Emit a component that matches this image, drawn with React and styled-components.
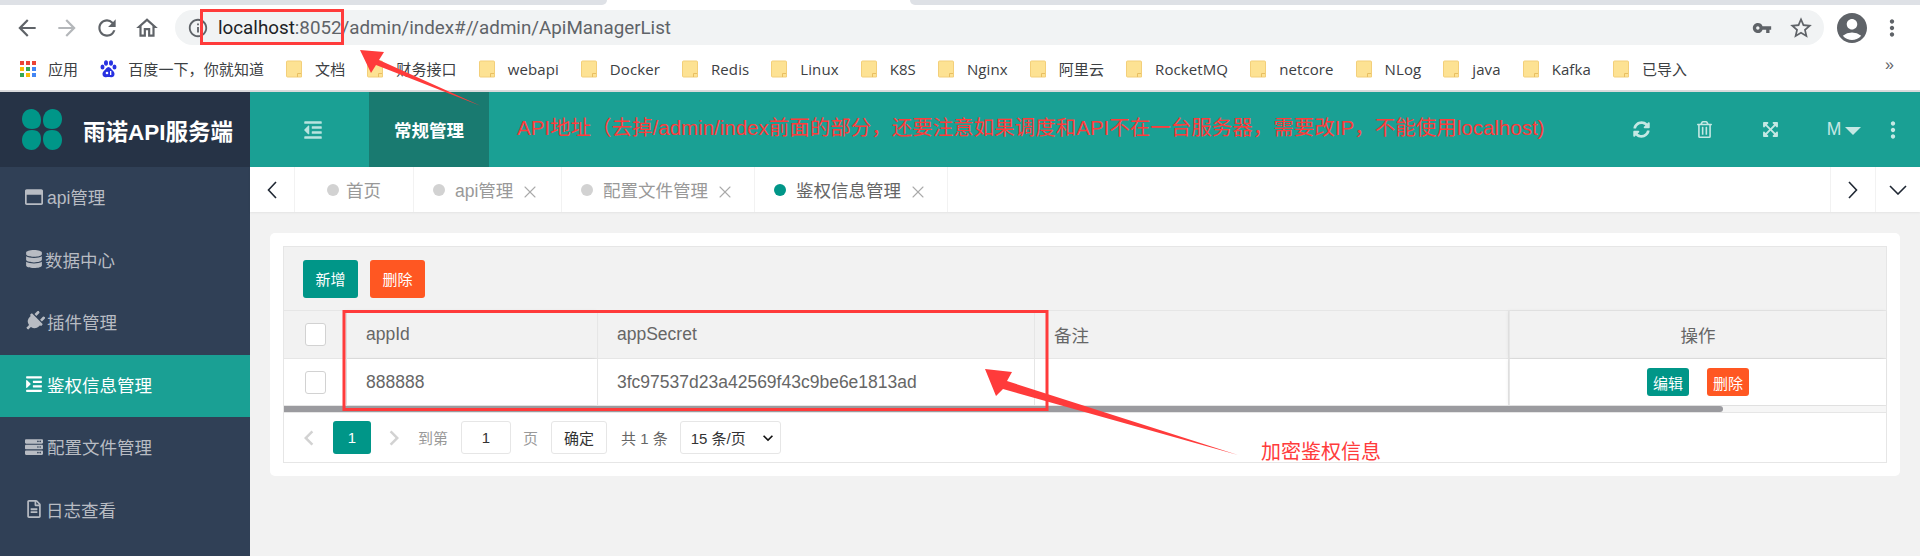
import React from 'react';
import styled, { createGlobalStyle } from 'styled-components';
import { X } from 'lucide-react';
import { FaRegWindowMaximize, FaDatabase, FaPlug, FaIndent, FaServer, FaRegFileAlt, FaSyncAlt, FaRegTrashAlt, FaExpandArrowsAlt, FaOutdent } from 'react-icons/fa';
import { MdArrowBack, MdArrowForward, MdRefresh, MdOutlineHome, MdInfoOutline, MdVpnKey, MdStarBorder, MdAccountCircle, MdMoreVert, MdKeyboardArrowLeft, MdKeyboardArrowRight, MdExpandMore } from 'react-icons/md';

const sans = `"Liberation Sans", "Noto Sans CJK SC", sans-serif`;

const Global = createGlobalStyle`
  html, body { margin: 0; padding: 0; background: #fff; }
  body { font-family: ${sans}; overflow: hidden; }
  * { box-sizing: border-box; }
`;

const Page = styled.div`position: relative; width: 1920px; height: 556px; overflow: hidden; display: flex; flex-direction: column;`;

/* browser chrome */
const TabStrip = styled.div`display: flex; height: 5px; flex: none;`;
const StripPiece = styled.div`
  background: ${p => p.$active ? '#fff' : '#dee1e6'};
  width: ${p => p.$w ? p.$w + 'px' : 'auto'};
  flex: ${p => p.$w ? 'none' : 1};
  border-radius: ${p => p.$side === 'l' ? '0 0 5px 0' : p.$side === 'r' ? '0 0 0 5px' : '0'};
`;
const NavBar = styled.div`display: flex; align-items: center; height: 35px; margin-top: 5px; padding-left: 7px; flex: none;`;
const NavBtn = styled.div`width: 40px; flex: none; display: flex; justify-content: center; align-items: center; color: ${p => p.$off ? '#b4b7ba' : '#5f6368'}; font-size: 26px; line-height: 0;`;
const Address = styled.div`
  width: 1649px; height: 35px; margin-left: 8px; background: #f1f3f4; border-radius: 18px; flex: none;
  display: flex; align-items: center; padding-left: 12px; padding-right: 10px; color: #5f6368;
`;
const Url = styled.div`font-family: Roboto, ${sans}; font-size: 18.8px; margin-left: 9px; flex: 1; color: #5f6368; white-space: nowrap; strong { font-weight: 400; color: #202124; }`;
const AddrIcon = styled.span`display: flex; color: #5f6368; font-size: ${p => p.$s || 22}px; margin-left: ${p => p.$ml || 0}px;`;
const ChromeEnd = styled.div`flex: 1; display: flex; align-items: center; color: #5f6368; padding-left: 10px;`;

const Bookmarks = styled.div`display: flex; align-items: center; padding: 2px 0 0 20px; flex: none; position: relative; border-bottom: 2px solid #d9dadc; height: 47px;`;
const Mark = styled.div`display: flex; align-items: center; gap: ${p => p.$gap ?? 13}px; margin-right: 22px; font-size: 15px; letter-spacing: .1px; color: #3c4043; font-family: "Open Sans", "Noto Sans CJK SC", sans-serif; white-space: nowrap;`;
const More = styled.span`position: absolute; left: 1885px; top: 11px; font-size: 16px; color: #5f6368;`;

/* app */
const App_ = styled.div`flex: 1; display: grid; grid-template-columns: 250px 1fr; grid-template-rows: 75px 1fr; min-height: 0;`;
const Logo = styled.div`background: #263346; display: flex; align-items: center; padding-left: 22px; gap: 21px; color: #fff; font-weight: 700; font-size: 22.5px;`;
const Petals = styled.svg`width: 40px; height: 41px; flex: none;`;
const Header = styled.div`background: #1aa094; display: flex; align-items: stretch; color: #c5e8e4;`;
const Burger = styled.div`width: 119px; padding-left: 6px; display: flex; align-items: center; justify-content: center; font-size: 20px; color: #b9e3df;`;
const HeaderTab = styled.div`width: 120px; background: #197a70; color: #fff; font-weight: 700; font-size: 17.5px; display: flex; align-items: center; justify-content: center;`;
const HeaderTools = styled.div`margin-left: auto; display: flex; align-items: center;`;
const Tool = styled.div`width: ${p => p.$w || 63}px; margin-left: ${p => p.$ml || 0}px; display: flex; justify-content: center; align-items: center; gap: 4px; font-size: ${p => p.$fs || 17}px;`;
const Caret = styled.span`width: 0; height: 0; border-left: 8px solid transparent; border-right: 8px solid transparent; border-top: 8px solid #c5e8e4; margin-top: 3px;`;

const Side = styled.nav`background: #304056; min-height: 0;`;
const SideItem = styled.div`
  height: 62.5px; display: flex; align-items: center; padding: 0 0 3px 25px; gap: ${p => p.$gap ?? 4}px;
  background: ${p => p.$active ? '#1aa094' : 'transparent'};
  color: ${p => p.$active ? '#fff' : '#b8bcc3'}; font-size: 17.5px;
  svg { font-size: 18px; flex: none; }
`;
const DiagonalPlug = styled(FaPlug)`
  transform: rotate(45deg);
  &&& { font-size: 21px; margin: 0 -1.5px; }
`;

const Main = styled.main`background: #f2f2f2; display: flex; flex-direction: column; min-height: 0;`;
const Tabs = styled.div`height: 45px; background: #fff; display: flex; align-items: stretch; flex: none; box-shadow: 0 1px 2px rgba(0,0,0,.06);`;
const ArrowCell = styled.div`width: ${p => p.$w || 45}px; flex: none; display: flex; align-items: center; justify-content: center; color: #222; border-right: ${p => p.$left ? '0' : '1px solid #f2f2f2'}; border-left: ${p => p.$left ? '1px solid #f2f2f2' : '0'};`;
const Chevron = styled.svg`fill: none; stroke: #1f2733; stroke-width: 1.6; flex: none;`;
const TabCell = styled.div`display: flex; align-items: center; height: 100%; width: ${p => p.$w}px; border-right: 1px solid #f2f2f2; padding-left: ${p => p.$home ? 32 : 19}px; flex: none; color: ${p => p.$active ? '#666' : '#999'}; font-size: 17.5px; white-space: nowrap;`;
const Dot = styled.i`width: 12px; height: 12px; border-radius: 50%; background: ${p => p.$active ? '#009688' : '#d2d2d2'}; margin-right: ${p => p.$home ? 7 : 10}px; flex: none;`;
const Close = styled(X)`color: #aaa; width: 20px; height: 20px; margin: 4px -4px 0 7px; stroke-width: 1.3;`;
const TabSpacer = styled.div`flex: 1;`;

const Card = styled.section`background: #fff; border-radius: 5px; margin: 21px 20px 0; padding: 13px; height: 243px; flex: none;`;
const Table = styled.div`border: 1px solid #e6e6e6; height: 217px; display: flex; flex-direction: column;`;
const Toolbar = styled.div`height: 64px; background: #f2f2f2; border-bottom: 1px solid #e6e6e6; display: flex; align-items: center; padding: 0 0 0 19px; gap: 12px; flex: none;`;
const Btn = styled.button`
  border: 0; padding: 0; font-family: ${sans}; color: #fff; font-size: 15px; border-radius: 3px;
  background: ${p => p.$danger ? '#ff5722' : '#009688'};
  width: ${p => p.$small ? 42 : 55}px; height: ${p => p.$small ? 28 : 38}px;
`;
const Row = styled.div`
  display: grid; grid-template-columns: 63px 251px 437px 474px 1fr; height: ${p => p.$head ? 48 : 47}px; flex: none;
  background: ${p => p.$head ? '#f2f2f2' : '#fff'}; border-bottom: 1px solid #e6e6e6;
  color: #666; font-size: 17.5px;
`;
const Cell = styled.div`
  display: flex; align-items: center; padding-left: 19px; border-right: 1px solid #e6e6e6;
  ${p => p.$center && 'justify-content: center; padding-left: 0; gap: 18px;'}
  ${p => p.$fixedL && 'border-right: 1px solid #e6e6e6; box-shadow: -2px 0 4px rgba(0,0,0,.06);'}
  ${p => p.$fixedR && 'border-right: 0; border-left: 1px solid #e6e6e6; box-shadow: -1px 0 4px rgba(0,0,0,.06);'}
`;
const Check = styled.span`width: 21px; height: 23px; border: 1px solid #d2d2d2; border-radius: 3px; background: #fff; margin-left: 2px;`;
const Scroll = styled.div`height: 6px; background: #f6f6f6; flex: none;`;
const Thumb = styled.div`height: 100%; background: #9b9b9f; border-radius: 0 3px 3px 0;`;
const Pager = styled.div`flex: 1; border-top: 1px solid #e6e6e6; display: flex; align-items: center; padding-left: 19px; color: #999; font-size: 15px; white-space: nowrap;`;
const PageArrow = styled.span`display: flex; color: #d2d2d2; font-size: 30px; margin: ${p => p.$m};`;
const PageNow = styled.span`width: 38px; height: 33px; background: #009688; color: #fff; border-radius: 3px; display: flex; align-items: center; justify-content: center; font-size: 15px;`;
const PageInput = styled.span`width: 50px; height: 33px; border: 1px solid #e6e6e6; border-radius: 3px; margin: 0 12px 0 13px; color: #333; display: flex; align-items: center; justify-content: center;`;
const PageBtn = styled.span`width: 56px; height: 33px; border: 1px solid #e6e6e6; border-radius: 3px; margin: 0 14px 0 13px; color: #333; display: flex; align-items: center; justify-content: center;`;
const Total = styled.span`color: #666; margin-right: 12px;`;
const PageSelect = styled.span`width: 101px; height: 33px; border: 1px solid #e6e6e6; border-radius: 3px; color: #333; display: flex; align-items: center; justify-content: space-between; padding: 0 2px 0 10px; svg { font-size: 20px; color: #111; }`;

/* annotation layer */
const Overlay = styled.svg`position: absolute; left: 0; top: 0; width: 1920px; height: 556px; pointer-events: none;`;
const Note = styled.div`position: absolute; left: ${p => p.$x}px; top: ${p => p.$y}px; color: #ff3b3b; font-size: ${p => p.$fs}px; font-family: ${sans}; white-space: nowrap; line-height: 1.2;`;

const Folder = () => (
  <svg width="16" height="18" viewBox="0 0 16 18">
    <path d="M1.5 1h13a1 1 0 0 1 1 1v15H1.5a1 1 0 0 1-1-1V2a1 1 0 0 1 1-1z" fill="#fde293" stroke="#f3cf7a" />
    <path d="M11.5 17v-3.5H15" fill="none" stroke="#e8bf62" />
  </svg>
);
const Apps = () => (
  <svg width="16" height="16" viewBox="0 0 16 16">
    {[['#ea4335','#ea4335','#ea4335'],['#fbbc05','#34a853','#4285f4'],['#34a853','#fbbc05','#4285f4']].flatMap((row, r) => row.map((c, i) => (
      <rect key={`${r}${i}`} x={i * 6} y={r * 6} width="4" height="4" fill={c} />
    )))}
  </svg>
);
const Baidu = () => (
  <svg width="17" height="18" viewBox="0 0 17 18" fill="#2932e1">
    <ellipse cx="2.5" cy="7" rx="2" ry="2.6" />
    <ellipse cx="6" cy="3" rx="2" ry="2.8" />
    <ellipse cx="11" cy="3" rx="2" ry="2.8" />
    <ellipse cx="14.5" cy="7" rx="2" ry="2.6" />
    <path d="M8.5 7c-2 0-2.7 2.4-4.2 3.6C2.8 12 2.5 13 2.5 14.2 2.5 16.4 4.4 17.5 6 17.2c1.5-.3 3.5-.3 5 0 1.6.3 3.5-.8 3.5-3 0-1.2-.3-2.2-1.8-3.6C11.2 9.4 10.5 7 8.5 7z" />
    <circle cx="7" cy="13" r="1.3" fill="#fff" /><rect x="10" y="11" width="1.3" height="4" fill="#fff" />
  </svg>
);

const marks = ['文档','财务接口','webapi','Docker','Redis','Linux','K8S','Nginx','阿里云','RocketMQ','netcore','NLog','java','Kafka','已导入'];
const menu = [
  [FaRegWindowMaximize, 'api管理', 4], [FaDatabase, '数据中心', 2], [DiagonalPlug, '插件管理', 4],
  [FaIndent, '鉴权信息管理', 4, true], [FaServer, '配置文件管理', 4], [FaRegFileAlt, '日志查看', 3],
];
const tabs = [['首页', 119], ['api管理', 148, true], ['配置文件管理', 193, true], ['鉴权信息管理', 193, true, true]];

export default function App() {
  return (
    <Page>
      <Global />
      <TabStrip>
        <StripPiece $w={607} $side="l" /><StripPiece $w={303} $active /><StripPiece $side="r" />
      </TabStrip>
      <NavBar>
        <NavBtn><MdArrowBack /></NavBtn>
        <NavBtn $off><MdArrowForward /></NavBtn>
        <NavBtn><MdRefresh /></NavBtn>
        <NavBtn><MdOutlineHome /></NavBtn>
        <Address>
          <AddrIcon><MdInfoOutline /></AddrIcon>
          <Url><strong>localhost</strong>:8052/admin/index#//admin/ApiManagerList</Url>
          <AddrIcon $s={20}><MdVpnKey /></AddrIcon>
          <AddrIcon $s={26} $ml={16}><MdStarBorder /></AddrIcon>
        </Address>
        <ChromeEnd>
          <AddrIcon $s={36}><MdAccountCircle /></AddrIcon>
          <AddrIcon $s={26} $ml={9}><MdMoreVert /></AddrIcon>
        </ChromeEnd>
      </NavBar>
      <Bookmarks>
        <Mark $gap={12}><Apps />应用</Mark>
        <Mark $gap={11}><Baidu />百度一下，你就知道</Mark>
        {marks.map(m => <Mark key={m}><Folder />{m}</Mark>)}
        <More>»</More>
      </Bookmarks>
      <App_>
        <Logo>
          <Petals viewBox="0 0 40 41" fill="#009688">
            <path d="M9.5 0C15 0 19 5 19 11c0 5-2 9-9 9C3 20 0 15 0 10 0 4 4 0 9.5 0z" />
            <path d="M30.5 0C25 0 21 5 21 11c0 5 2 9 9 9 7 0 10-5 10-10C40 4 36 0 30.5 0z" />
            <path d="M9.5 41C15 41 19 36 19 30c0-5-2-9-9-9-7 0-10 5-10 10 0 6 4 10 9.5 10z" />
            <path d="M30.5 41C25 41 21 36 21 30c0-5 2-9 9-9 7 0 10 5 10 10 0 6-4 10-9.5 10z" />
          </Petals>
          雨诺API服务端
        </Logo>
        <Header>
          <Burger><FaOutdent /></Burger>
          <HeaderTab>常规管理</HeaderTab>
          <HeaderTools>
            <Tool><FaSyncAlt /></Tool>
            <Tool $w={64}><FaRegTrashAlt /></Tool>
            <Tool $ml={2.5}><FaExpandArrowsAlt /></Tool>
            <Tool $w={44} $ml={20} $fs={17.5}>M<Caret /></Tool>
            <Tool $w={54}><MdMoreVert style={{ fontSize: 26 }} /></Tool>
          </HeaderTools>
        </Header>
        <Side>
          {menu.map(([Icon, label, gap, active]) => (
            <SideItem key={label} $gap={gap} $active={active}><Icon />{label}</SideItem>
          ))}
        </Side>
        <Main>
          <Tabs>
            <ArrowCell>
              <Chevron width="10" height="18" viewBox="0 0 10 18"><path d="M9 1 1.5 9 9 17" /></Chevron>
            </ArrowCell>
            {tabs.map(([label, w, closable, active]) => (
              <TabCell key={label} $w={w} $home={!closable} $active={active}>
                <Dot $active={active} $home={!closable} />{label}{closable && <Close />}
              </TabCell>
            ))}
            <TabSpacer />
            <ArrowCell $left>
              <Chevron width="10" height="18" viewBox="0 0 10 18"><path d="M1 1 8.5 9 1 17" /></Chevron>
            </ArrowCell>
            <ArrowCell $left>
              <Chevron width="18" height="10" viewBox="0 0 18 10"><path d="M1 1 9 9 17 1" /></Chevron>
            </ArrowCell>
          </Tabs>
          <Card>
            <Table>
              <Toolbar><Btn>新增</Btn><Btn $danger>删除</Btn></Toolbar>
              <Row $head>
                <Cell><Check /></Cell>
                <Cell $fixedL>appId</Cell>
                <Cell>appSecret</Cell>
                <Cell>备注</Cell>
                <Cell $center $fixedR>操作</Cell>
              </Row>
              <Row>
                <Cell><Check /></Cell>
                <Cell $fixedL>888888</Cell>
                <Cell>3fc97537d23a42569f43c9be6e1813ad</Cell>
                <Cell />
                <Cell $center $fixedR><Btn $small>编辑</Btn><Btn $small $danger>删除</Btn></Cell>
              </Row>
              <Scroll><Thumb style={{ width: `${(1439 / 1602) * 100}%` }} /></Scroll>
              <Pager>
                <PageArrow $m="0 9px 0 -9px"><MdKeyboardArrowLeft /></PageArrow>
                <PageNow>1</PageNow>
                <PageArrow $m="0 9px 0 8px"><MdKeyboardArrowRight /></PageArrow>
                到第<PageInput>1</PageInput>页
                <PageBtn>确定</PageBtn>
                <Total>共 1 条</Total>
                <PageSelect>15 条/页<MdExpandMore /></PageSelect>
              </Pager>
            </Table>
          </Card>
        </Main>
      </App_>

      <Overlay viewBox="0 0 1920 556">
        <rect x="201.5" y="10.5" width="141" height="33" fill="none" stroke="#ff3b3b" strokeWidth="3" />
        <rect x="344" y="311.5" width="703" height="98" fill="none" stroke="#ff3b3b" strokeWidth="3" />
        <polygon points="360,50 384,52 379,60 481,106 376,65 371,73" fill="#ff3b3b" />
        <polygon points="985,369 1012,372 1007,381 1238,455 1003,389 996,396" fill="#ff3b3b" />
      </Overlay>
      <Note $x={517} $y={116} $fs={20.5}>API地址（去掉/admin/index前面的部分，还要注意如果调度和API不在一台服务器，需要改IP，不能使用localhost)</Note>
      <Note $x={1261} $y={440} $fs={20}>加密鉴权信息</Note>
    </Page>
  );
}
